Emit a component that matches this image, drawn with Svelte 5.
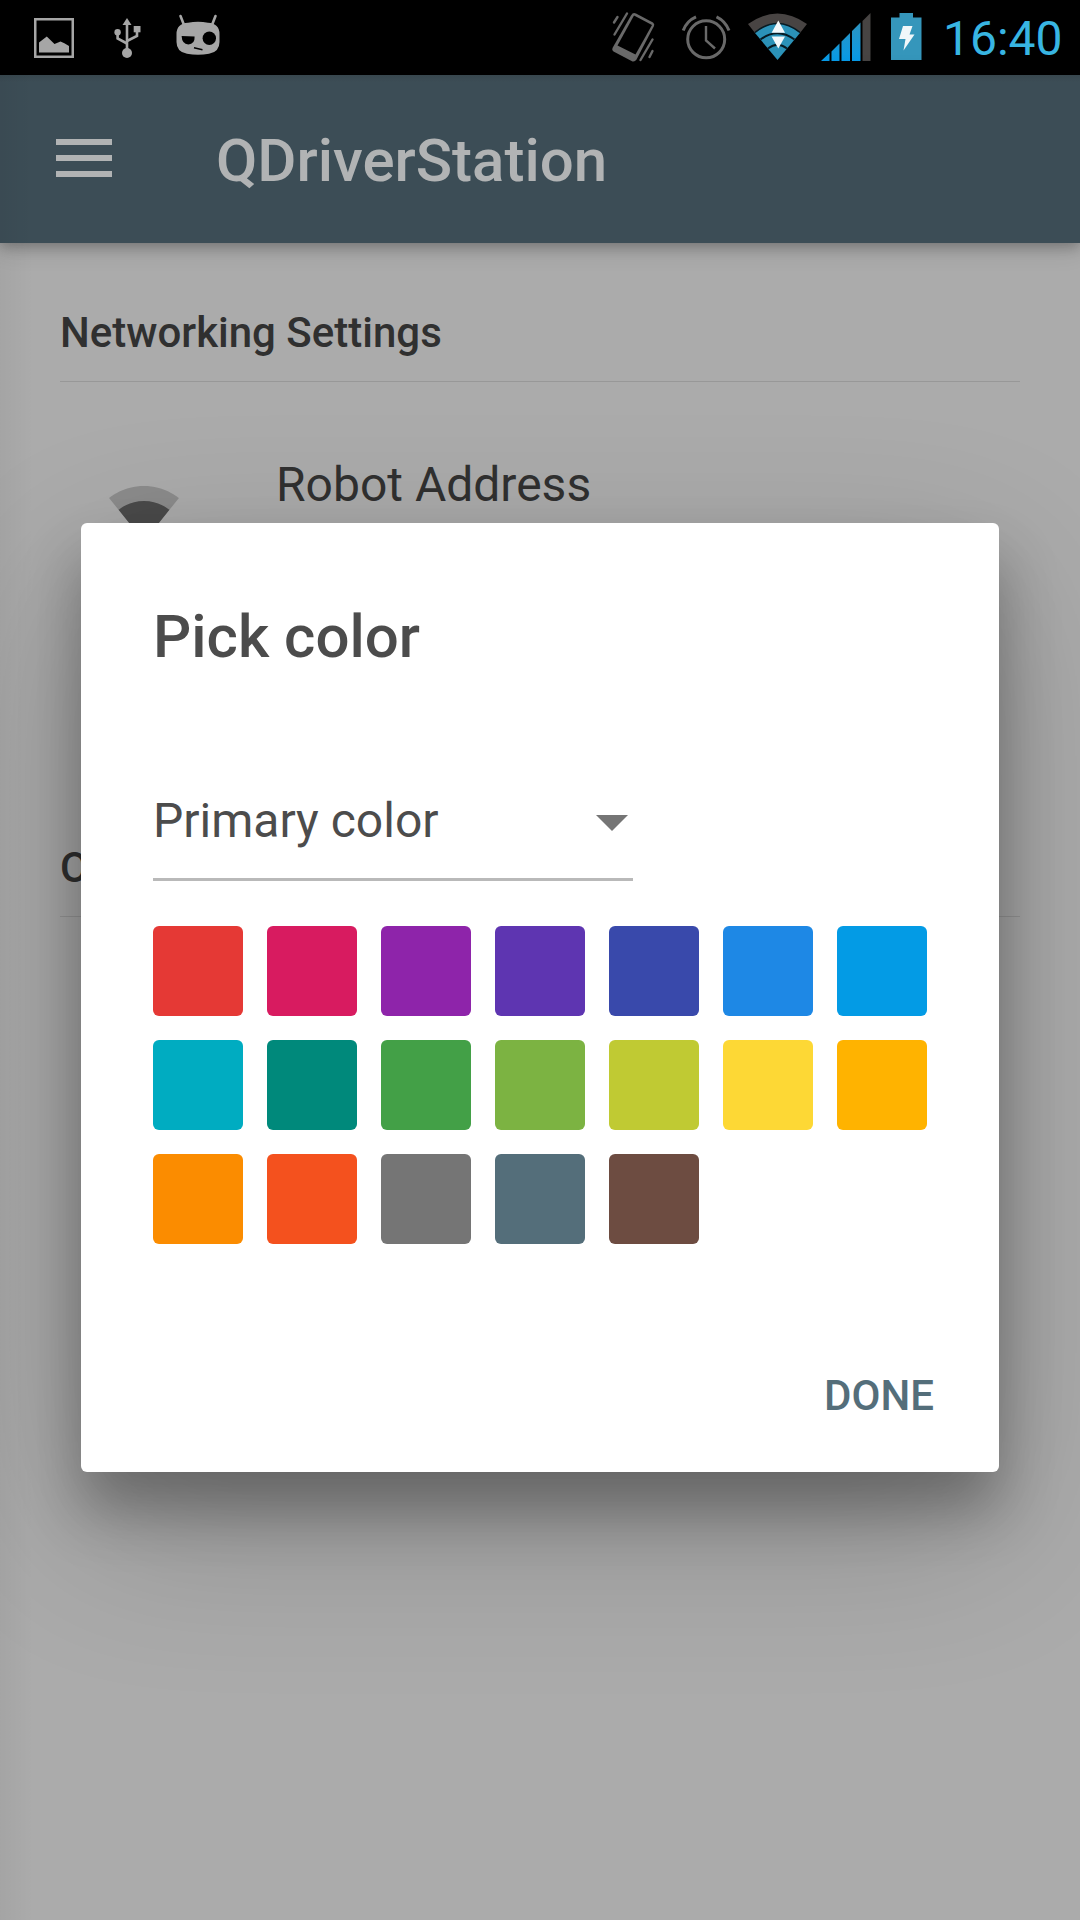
<script>
  const swatches = [
    '#e53935', '#d81b60', '#8e24aa', '#5e35b1', '#3949ab', '#1e88e5', '#039be5',
    '#00acc1', '#00897b', '#43a047', '#7cb342', '#c0ca33', '#fdd835', '#ffb300',
    '#fb8c00', '#f4511e', '#757575', '#546e7a', '#6d4c41'
  ];
</script>

<div class="screen">
  <header class="status">
    <div class="group">
      <svg width="44" height="75" viewBox="32 0 44 75">
        <rect x="35.25" y="19.25" width="37.5" height="37.5" fill="none" stroke="#a6a6a6" stroke-width="2.5" />
        <path d="M39 52.500V42.500L46.800 36.500L54.500 44L60.500 41.500Q64 42.500 69 46V52.500Z" fill="#a6a6a6" />
      </svg>
      <svg width="30" height="75" viewBox="112 0 30 75">
        <g fill="none" stroke="#a6a6a6" stroke-width="2.6">
          <path d="M127 24V52" />
          <path d="M117.600 33V38.500L127 43.500" />
          <path d="M137 30V36L127 41" />
        </g>
        <path d="M127 18L131.500 25H122.500Z" fill="#a6a6a6" />
        <circle cx="117.600" cy="32.300" r="3.200" fill="#a6a6a6" />
        <rect x="133.700" y="26" width="6.800" height="6.300" fill="#a6a6a6" />
        <circle cx="127" cy="53" r="5" fill="#a6a6a6" />
      </svg>
      <svg width="48" height="75" viewBox="174 0 48 75">
        <path d="M180.500 16L184 25M215.500 16L212 25" stroke="#a6a6a6" stroke-width="2.600" stroke-linecap="round" />
        <path d="M188 22.700Q198 21 208 22.700Q219.500 23.500 219.500 34V42Q219.500 52 209 53.800Q198 55.500 187 53.800Q176.500 52 176.500 42V34Q176.500 23.500 188 22.700Z" fill="#a6a6a6" />
        <path d="M181.600 36L194.600 36.500Q195 44 188.300 44.600Q182 44 181.600 36Z" />
        <circle cx="209.300" cy="38.300" r="6.700" />
        <path d="M194 47.800L202.500 49.700" stroke="#000" stroke-width="1.400" />
      </svg>
    </div>
    <div class="group right">
      <svg width="46" height="75" viewBox="610 0 46 75">
        <path d="M632.500 13.500Q634 12.500 636 13.500L653 22.500Q655 24 654 26L636.500 59.500Q635 62 632.500 61.500L613.500 51.500Q611.500 50 612.500 48L631 15.500Z" fill="#696969" />
        <path d="M634 15.500L652 25L635.500 54.500L617.500 45.500Z" />
        <g stroke="#696969" stroke-width="2.400" stroke-linecap="round">
          <path d="M627 13.500L614.500 34.500M617.500 17L614 22.500" />
          <path d="M652.500 39.500L640.500 60M652.500 51L649.500 57" />
        </g>
      </svg>
      <svg width="50" height="75" viewBox="681 0 50 75">
        <g fill="none" stroke="#696969" stroke-width="3">
          <circle cx="706.200" cy="39.300" r="18.500" />
          <path d="M706 26V40.500L715 48.500" stroke-width="2.400" />
          <path d="M683.200 30.500Q686.500 21 696 16.800M716.500 16.800Q725.500 21 729 30.500" />
        </g>
      </svg>
      <svg width="61" height="75" viewBox="747 0 61 75">
        <path d="M748 24Q777.500 3 807 24L800 33Q777.500 16 755 33Z" fill="#484443" />
        <path d="M755 33Q777.500 14 800 33L777.500 60Z" fill="#2b92b8" />
        <path d="M760.500 39.500Q777.500 27 794.500 39.500M768 48.500Q777.500 41 787 48.500" fill="none" stroke="#071a22" stroke-width="2" />
        <path d="M755 32.300Q777.500 14.500 800 32.300" fill="none" stroke="#071a22" stroke-width="1.500" />
        <path d="M778.300 20.500L785 32.800H771.600ZM778.300 48.500L785 36.500H771.600Z" fill="#f3f8fb" />
      </svg>
      <svg width="52" height="75" viewBox="820 0 52 75">
        <defs>
          <linearGradient id="signal" x1="0" y1="0" x2="0" y2="1">
            <stop offset="0" stop-color="#2d93bf" />
            <stop offset="1" stop-color="#079be8" />
          </linearGradient>
        </defs>
        <path d="M821 61L829.500 53V61ZM831.500 51.500L839.500 43.500V61H831.500ZM841.500 41.500L850 33V61H841.500ZM852 31L860.500 22.500V61H852Z" fill="url(#signal)" />
        <path d="M862.500 21L870.500 13V61H862.500Z" fill="#474443" />
      </svg>
      <svg width="34" height="75" viewBox="889 0 34 75">
        <path d="M899.500 13H913V17.500H921.500V60H891V17.500H899.500Z" fill="#3596bb" />
        <path d="M903 26H912.500L909.500 34.500H914.500L903.500 50.500L905.500 39H899Z" fill="#f1f7fa" />
      </svg>
      <time>16:40</time>
    </div>
  </header>

  <div class="app">
    <div class="appbar">
      <div class="burger"><i></i><i></i><i></i></div>
      <h1>QDriverStation</h1>
    </div>
    <main>
      <section class="network">
        <h2>Networking Settings</h2>
        <div class="item">
          <svg width="72" height="72" viewBox="0 0 24 24">
            <path d="M12.010 21.490L23.640 7C23.190 6.660 18.710 3 12 3S.81 6.660.36 7L11.990 21.490Z" fill="#8b8b8b" />
            <path d="M3.530 10.950L12 21.500L20.470 10.950C20.040 10.620 16.810 8 12 8S3.960 10.620 3.530 10.950Z" fill="#4a4a4a" />
          </svg>
          <span>Robot Address</span>
        </div>
      </section>
      <section>
        <h2>Other Settings</h2>
      </section>
    </main>
    <div class="edge"></div>

    <div class="dialog">
      <h3>Pick color</h3>
      <div class="select">
        <span>Primary color</span>
        <svg width="32" height="16" viewBox="0 0 32 16"><path d="M0 0H32L16 16Z" fill="#757575" /></svg>
      </div>
      <div class="palette">
        {#each swatches as color}
          <div class="swatch" style="background:{color}"></div>
        {/each}
      </div>
      <div class="actions"><button>DONE</button></div>
    </div>
  </div>
</div>

<style>
  :global(body) { margin: 0; background: #ababab; }
  .screen {
    width: 1080px; height: 1920px; overflow: hidden;
    display: flex; flex-direction: column;
    font-family: Roboto, "Liberation Sans", sans-serif;
  }
  svg { display: block; flex: none; }
  h1, h2, h3 { margin: 0; font-weight: 500; }
  .status {
    height: 75px; flex: none; background: #000; box-sizing: border-box;
    display: flex; justify-content: space-between; padding: 0 18px 0 32px;
  }
  .group { display: flex; align-items: center; gap: 36px; }
  .group svg:nth-child(3) { margin-left: -4px; }
  .right { gap: 0; }
  .right svg { margin-right: 25px; }
  .right svg:nth-child(2) { margin-right: 16px; }
  .right svg:nth-child(3) { margin: 0 12px 0 0; }
  .right svg:nth-child(4) { margin-right: 17px; }
  .right svg:nth-child(5) { margin-right: 19px; }
  time { width: 119px; padding-left: 1px; font-size: 48px; line-height: 56px; color: #38b5e2; padding-top: 3px; white-space: nowrap; }
  .app { position: relative; flex: 1; background: #ababab; }
  .appbar {
    position: relative; height: 168px; box-sizing: border-box;
    display: flex; align-items: center; gap: 104px; padding-left: 56px;
    background: linear-gradient(#38474e, #3c4d56 7px);
    box-shadow: 0 4px 12px rgba(0, 0, 0, .22), 0 4px 24px rgba(0, 0, 0, .16);
  }
  .burger { width: 56px; display: grid; gap: 10px; margin-bottom: 2px; }
  .burger i { height: 6px; background: #b1b3b4; }
  h1 { font-size: 60px; line-height: 70px; color: #b1b3b4; padding-top: 4px; }
  main { padding: 0 60px; }
  section { height: 535px; }
  h2 {
    height: 139px; box-sizing: border-box; padding-top: 65px;
    font-size: 42px; line-height: 50px; color: #303030;
    border-bottom: 1px solid #989898;
  }
  .item { display: flex; align-items: flex-start; gap: 96px; padding: 75px 48px 0; }
  .item svg { margin-top: 20px; }
  .item span { font-size: 48px; line-height: 56px; color: #303030; }
  .edge {
    position: absolute; left: 0; top: 0; bottom: 0; width: 34px;
    background: linear-gradient(90deg, rgba(0, 0, 0, .04), transparent);
  }
  .dialog {
    position: absolute; left: 81px; top: 448px; width: 918px; height: 949px;
    box-sizing: border-box; padding: 79px 54px 0 72px;
    display: flex; flex-direction: column;
    background: #fff; border-radius: 6px;
    box-shadow: 0 57px 170px rgba(0, 0, 0, .2), 0 38px 60px rgba(0, 0, 0, .3);
  }
  h3 { font-size: 60px; line-height: 70px; color: #4c4c4c; }
  .select {
    width: 480px; height: 126px; margin-top: 83px; box-sizing: border-box;
    display: flex; align-items: center; justify-content: space-between;
    padding: 9px 5px 0 0; border-bottom: 3px solid #b9b9b9;
    font-size: 48px; line-height: 56px; color: #4c4c4c;
  }
  .select svg { margin-top: 3px; }
  .palette { display: grid; grid-template-columns: repeat(7, 90px); grid-auto-rows: 90px; gap: 24px; margin-top: 45px; }
  .swatch { border-radius: 6px; }
  .actions { display: flex; justify-content: flex-end; padding: 127px 11px 0; }
  button { border: 0; padding: 0; background: none; font: 500 42px/50px Roboto, sans-serif; color: #546e7a; }
</style>
